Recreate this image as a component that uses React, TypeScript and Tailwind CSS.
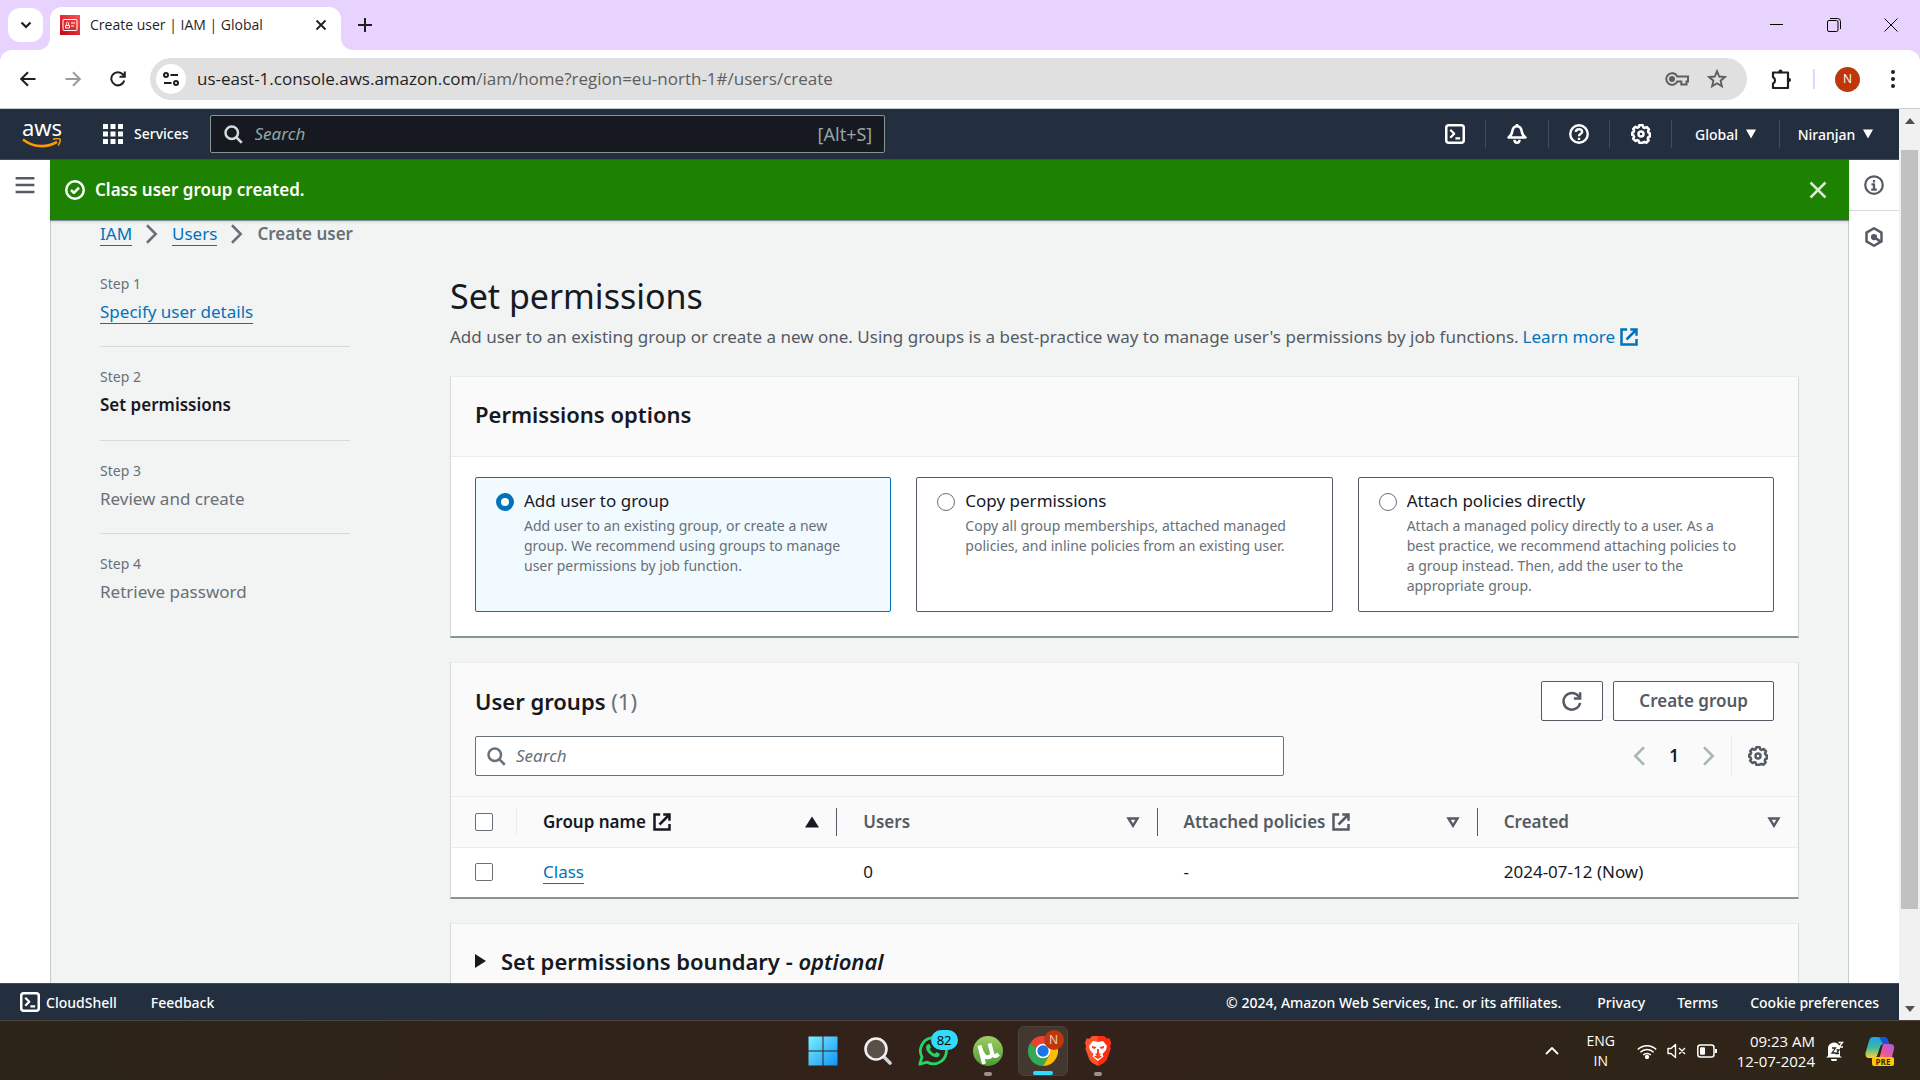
import type { ReactNode } from "react";

/* ---------- Icon helpers ---------- */

type IconProps = { className?: string };

function Glyph({ className = "size-5", children }: { className?: string; children: ReactNode }) {
  return (
    <svg viewBox="0 0 16 16" fill="none" stroke="currentColor" strokeWidth="2" strokeLinejoin="round" className={`shrink-0 ${className}`} aria-hidden="true">
      {children}
    </svg>
  );
}

const SearchIcon = ({ className }: IconProps) => (
  <Glyph className={className}>
    <circle cx="7" cy="7" r="5" />
    <path d="m15 15-4.5-4.5" />
  </Glyph>
);

const ExternalIcon = ({ className }: IconProps) => (
  <Glyph className={className}>
    <path strokeLinejoin="miter" d="M9 2h5v5M6 10l8-8M14 9.500V14H2V2h4.500" />
  </Glyph>
);

const GearIcon = ({ className }: IconProps) => (
  <Glyph className={className}>
    <path d="M6.6 1h2.8l.5 1.7 1.1.5 1.5-.8 1.9 1.9-.8 1.6.4 1 1 .4v2.8l-1.2.5-.4 1 .7 1.5-1.9 1.9-1.4-.7-1.1.5L9.300 15H6.600l-.5-1.600-1.100-.5-1.500.7L1.700 11.700l.8-1.400-.500-1.200L1 8.700V6.900l1.100-.5.4-1.100-.700-1.400 1.800-1.700 1.400.8 1.200-.5z" />
    <circle cx="8" cy="8" r="2" />
  </Glyph>
);

const ShellIcon = ({ className }: IconProps) => (
  <Glyph className={className}>
    <rect x="1" y="1" width="14" height="14" rx="2" strokeWidth="2" />
    <path d="m4.200 4.600 3.200 3.200-3.200 3.200M8.300 11.500h3.800" strokeWidth="1.800" />
  </Glyph>
);

const AngleRight = ({ className }: IconProps) => (
  <Glyph className={className}>
    <path strokeLinejoin="miter" d="m4 1 7 7-7 7" />
  </Glyph>
);

const AngleLeft = ({ className }: IconProps) => (
  <Glyph className={className}>
    <path strokeLinejoin="miter" d="M12 1 5 8l7 7" />
  </Glyph>
);

const CloseIcon = ({ className }: IconProps) => (
  <Glyph className={className}>
    <path d="m2 2 12 12M14 2 2 14" />
  </Glyph>
);

const CaretDown = ({ className }: IconProps) => (
  <svg viewBox="0 0 10 10" className={`shrink-0 ${className}`} aria-hidden="true">
    <path d="M0 0.500h10L5 9.500z" fill="currentColor" />
  </svg>
);

const SortIcon = () => (
  <svg viewBox="0 0 14 12" className="h-3 w-3.5 shrink-0 text-[#545b64]" aria-hidden="true">
    <path d="M2.500 2.500h9L7 9.800z" fill="none" stroke="currentColor" strokeWidth="2.400" />
  </svg>
);

/* ---------- Browser window ---------- */

function TabStrip() {
  return (
    <div className="flex h-[50px] shrink-0 items-end bg-[#e8d3fe] pl-2 text-[#1f1f1f]">
      <button aria-label="Search tabs" className="mb-2 flex h-[34px] w-[35px] items-center justify-center rounded-xl bg-white">
        <svg viewBox="0 0 12 12" className="size-3" fill="none" stroke="currentColor" strokeWidth="2.200">
          <path d="m1.500 3.500 4.500 4.500 4.500-4.500" />
        </svg>
      </button>
      <svg viewBox="0 0 12 12" className="-ml-[5px] size-3 shrink-0" aria-hidden="true">
        <path d="M12 0v12H0A12 12 0 0 0 12 0z" fill="#fff" />
      </svg>
      <div className="flex h-[43px] w-[291px] items-center rounded-t-xl bg-white pr-3.5 pb-[7px] pl-2.5">
        <svg viewBox="0 0 20 20" className="size-5 shrink-0" aria-hidden="true">
          <defs>
            <linearGradient id="iam" x1="0" y1="1" x2="1" y2="0">
              <stop offset="0" stopColor="#bd0816" />
              <stop offset="1" stopColor="#ff5252" />
            </linearGradient>
          </defs>
          <path fill="url(#iam)" d="M0 0h20v20H0z" />
          <rect x="3" y="4.500" width="14" height="11" rx="1" fill="none" stroke="#fff" />
          <path d="M5.500 13v-2.500h4V13zM6.300 10.500V8.700q0-1.300 1.200-1.300t1.200 1.300v1.800M11 8h4M11 11h3" fill="none" stroke="#fff" />
        </svg>
        <span className="ml-2.5 flex-1 whitespace-nowrap text-[14px] leading-5">Create user | IAM | Global</span>
        <button aria-label="Close tab">
          <svg viewBox="0 0 12 12" className="size-3" fill="none" stroke="currentColor" strokeWidth="1.800">
            <path d="m1.500 1.500 9 9M10.500 1.500l-9 9" />
          </svg>
        </button>
      </div>
      <svg viewBox="0 0 12 12" className="size-3 shrink-0" aria-hidden="true">
        <path d="M0 0v12h12A12 12 0 0 1 0 0z" fill="#fff" />
      </svg>
      <button aria-label="New tab" className="mb-[18px] ml-[5px]">
        <svg viewBox="0 0 14 14" className="size-3.5" fill="none" stroke="currentColor" strokeWidth="2">
          <path d="M7 0v14M0 7h14" />
        </svg>
      </button>
      <div className="ml-auto flex h-full items-center text-black">
        <button aria-label="Minimize" className="flex w-[57px] justify-center">
          <svg viewBox="0 0 14 14" className="size-3.5" stroke="currentColor"><path d="M0 6.500h13" /></svg>
        </button>
        <button aria-label="Restore" className="flex w-[57px] justify-center">
          <svg viewBox="0 0 14 14" className="size-3.5" fill="none" stroke="currentColor">
            <rect x=".5" y="2.500" width="10.500" height="11" rx="1.500" />
            <path d="M3 .5h7.500a3 3 0 0 1 3 3V11" />
          </svg>
        </button>
        <button aria-label="Close window" className="flex w-[58px] justify-center">
          <svg viewBox="0 0 14 14" className="size-3.5" stroke="currentColor"><path d="m.5.5 13 13M13.500.5l-13 13" /></svg>
        </button>
      </div>
    </div>
  );
}

function AddressBar() {
  return (
    <div className="shrink-0 bg-[#e8d3fe]">
      <div className="flex h-[59px] items-center rounded-t-xl border-b border-[#c9ccc9] bg-white pr-[25px] text-[#1f1f1f]">
        <div className="flex w-[150px] shrink-0 items-center gap-[29px] pl-5">
          <button aria-label="Back">
            <svg viewBox="0 0 16 16" className="size-4" fill="none" stroke="currentColor" strokeWidth="2"><path d="M15.500 8H1.500M8 1.200 1.200 8 8 14.800" /></svg>
          </button>
          <button aria-label="Forward" className="text-[#9b9b9b]">
            <svg viewBox="0 0 16 16" className="size-4" fill="none" stroke="currentColor" strokeWidth="2"><path d="M.5 8h14M8 1.200 14.800 8 8 14.800" /></svg>
          </button>
          <button aria-label="Reload">
            <svg viewBox="0 0 16 16" className="size-4" fill="none" stroke="currentColor" strokeWidth="2"><path d="M14.300 9.500A6.600 6.600 0 1 1 13 3.500l1.500 1.700M14.800.5v5.300H9.500" /></svg>
          </button>
        </div>
        <div className="flex h-[42px] flex-1 items-center rounded-full bg-[#e0e0e0] pr-5 pl-1.5">
          <button aria-label="View site information" className="flex size-[30px] items-center justify-center rounded-full bg-white">
            <svg viewBox="0 0 16 14" className="h-3.5 w-4" fill="none" stroke="currentColor" strokeWidth="2">
              <circle cx="3" cy="3" r="2" /><path d="M7.500 3H15M1 11h7.500" /><circle cx="13" cy="11" r="2" />
            </svg>
          </button>
          <span className="ml-[11px] flex-1 whitespace-nowrap text-[17px] leading-6 text-[#5e5e5e]">
            <span className="text-[#1f1f1f]">us-east-1.console.aws.amazon.com</span>/iam/home?region=eu-north-1#/users/create
          </span>
          <button aria-label="Passwords" className="text-[#5e5e5e]">
            <svg viewBox="0 0 24 14" className="h-3.5 w-6" fill="none" stroke="currentColor" strokeWidth="2">
              <path d="M12.300 4.500A5.800 5.800 0 1 0 12.300 9.500h4v3h5.200v-3h1.500v-5z" /><circle cx="7" cy="7" r="2" fill="currentColor" />
            </svg>
          </button>
          <button aria-label="Bookmark" className="ml-[18px] text-[#5e5e5e]">
            <svg viewBox="0 0 20 20" className="size-5" fill="none" stroke="currentColor" strokeWidth="1.900">
              <path d="m10 2.200 2.200 5.300 5.700.5-4.300 3.700 1.300 5.600-4.900-3-4.900 3 1.300-5.600L2.100 8l5.700-.5z" />
            </svg>
          </button>
        </div>
        <button aria-label="Extensions" className="ml-[23px]">
          <svg viewBox="0 0 22 22" className="size-[22px]" fill="none" stroke="currentColor" strokeWidth="2.200">
            <path d="M3 4.500h15V20H3v-4.500a3.400 3.400 0 0 0 0-6.200z" strokeLinejoin="round" />
            <circle cx="10.500" cy="3.500" r="2" fill="currentColor" stroke="none" /><circle cx="19" cy="12" r="2" fill="currentColor" stroke="none" />
          </svg>
        </button>
        <span className="ml-[21px] h-5 w-0.5 bg-[#e8d3fe]" />
        <button aria-label="Profile" className="ml-5 flex size-[25px] items-center justify-center rounded-full bg-[#bf360c] text-[12px] text-white">N</button>
        <button aria-label="Menu" className="ml-[31px] flex flex-col gap-[3px]">
          <span className="size-1 rounded-full bg-current" />
          <span className="size-1 rounded-full bg-current" />
          <span className="size-1 rounded-full bg-current" />
        </button>
      </div>
    </div>
  );
}

/* ---------- AWS console ---------- */

const Divider = () => <span className="h-7 w-px shrink-0 bg-[#414d5c]" />;

function ConsoleNav() {
  return (
    <header className="flex h-[51px] shrink-0 items-center border-b border-[#414d5c] bg-[#232f3e] pl-[22px] font-medium text-white">
      <a href="#home" aria-label="AWS home" className="flex w-[40px] flex-col items-center">
        <span className="h-[18px] text-[22px] leading-[14px] font-normal">aws</span>
        <svg viewBox="0 0 40 10" className="h-2.5 w-10" fill="none" stroke="#ff9900" aria-hidden="true">
          <path d="M1 1.500c10 8 23.500 8.700 34 2.300" strokeWidth="2.600" />
          <path d="M31 1.300c3-.7 6.300-.9 7 0s-.300 4.200-1.900 6.200" strokeWidth="1.500" />
        </svg>
      </a>
      <span className="ml-[21px]"><Divider /></span>
      <button className="ml-[20px] flex items-center gap-[11px] text-[14px] leading-5">
        <svg viewBox="0 0 20 20" className="size-5" fill="currentColor" aria-hidden="true">
          <path d="M0 0h5v5H0zM7.500 0h5v5h-5zM15 0h5v5h-5zM0 7.500h5v5H0zM7.500 7.500h5v5h-5zM15 7.500h5v5h-5zM0 15h5v5H0zM7.500 15h5v5h-5zM15 15h5v5h-5z" />
        </svg>
        Services
      </button>
      <label className="ml-[21px] flex h-[38px] w-[36%] items-center rounded-xs border border-[#879596] bg-[#16191f] px-3 font-normal text-[#95a5a6]">
        <SearchIcon className="size-5 text-[#d5dbdb]" />
        <input aria-label="Search services" placeholder="Search" className="ml-3 min-w-0 flex-1 bg-transparent text-[17px] outline-none placeholder:text-[#95a5a6] placeholder:italic" />
        <span className="text-[18px]">[Alt+S]</span>
      </label>
      <div className="ml-auto flex items-center">
        <button aria-label="CloudShell" className="flex w-[60px] justify-center"><ShellIcon /></button>
        <Divider />
        <button aria-label="Notifications" className="flex w-[62px] justify-center">
          <Glyph>
            <path d="M8 1.800c2.400 0 3.400 1.500 3.800 4.200.3 2.300 1.300 3.500 3 4.800H1.200c1.700-1.300 2.700-2.500 3-4.800C4.600 3.300 5.600 1.800 8 1.800zM6 12.500c0 3.200 4 3.200 4 0" strokeWidth="2" /><path d="M8 0v2" />
          </Glyph>
        </button>
        <Divider />
        <button aria-label="Support" className="flex w-[60px] justify-center">
          <Glyph>
            <circle cx="8" cy="8" r="7" strokeWidth="1.900" />
            <path d="M5.500 6.300C5.500 3.500 10.500 3.500 10.500 6.300 10.500 8 8 7.800 8 9.800M8 11v1.700" strokeWidth="1.900" />
          </Glyph>
        </button>
        <Divider />
        <button aria-label="Settings" className="flex w-[61px] justify-center"><GearIcon /></button>
        <Divider />
        <button className="flex w-[107px] items-center justify-center gap-2 text-[14px]">Global <CaretDown className="size-2.5" /></button>
        <Divider />
        <button className="flex w-[119px] items-center justify-center gap-2 pr-2 text-[14px]">Niranjan <CaretDown className="size-2.5" /></button>
      </div>
    </header>
  );
}

const steps = [
  { label: "Specify user details", state: "link" },
  { label: "Set permissions", state: "current" },
  { label: "Review and create", state: "todo" },
  { label: "Retrieve password", state: "todo" },
];

function Steps() {
  return (
    <ol className="w-[250px] shrink-0 text-[#687078]">
      {steps.map((s, i) => (
        <li key={s.label} className="flex h-[93px] flex-col border-b border-[#d5dbdb] pt-[18px] first:h-[75px] first:pt-0 last:border-0 [&:nth-child(2)]:h-[94px]">
          <span className="text-[14px] leading-6">Step {i + 1}</span>
          {s.state === "link" && <a href="#details" className="mt-1 self-start border-b border-[#0073bb] text-[17px] leading-[23px] text-[#0073bb]">{s.label}</a>}
          {s.state === "current" && <span className="mt-1 text-[17px] leading-6 font-semibold text-[#16191f]">{s.label}</span>}
          {s.state === "todo" && <span className="mt-1 text-[17px] leading-6">{s.label}</span>}
        </li>
      ))}
    </ol>
  );
}

const options = [
  { id: "group", title: "Add user to group", text: "Add user to an existing group, or create a new group. We recommend using groups to manage user permissions by job function." },
  { id: "copy", title: "Copy permissions", text: "Copy all group memberships, attached managed policies, and inline policies from an existing user." },
  { id: "attach", title: "Attach policies directly", text: "Attach a managed policy directly to a user. As a best practice, we recommend attaching policies to a group instead. Then, add the user to the appropriate group." },
];

function Panel({ children }: { children: ReactNode }) {
  return (
    <section className="border-x border-t border-b-2 border-x-[#d5dbdb] border-t-[#eaeded] border-b-[#879596] bg-white">{children}</section>
  );
}

function PermissionOptions() {
  return (
    <Panel>
      <h2 className="border-b border-[#eaeded] bg-[#fafafa] px-6 pt-[22px] pb-[27px] text-[22px] leading-[30px] font-semibold">Permissions options</h2>
      <div className="grid grid-cols-3 gap-[25px] px-6 pt-5 pb-6">
        {options.map((o, i) => (
          <label
            key={o.id}
            htmlFor={o.id}
            className="flex rounded-xs border border-[#545b64] bg-white pt-[11px] pr-[30px] pb-[15px] pl-5 has-checked:border-[#0073bb] has-checked:bg-[#f1faff]"
          >
            <input
              id={o.id}
              type="radio"
              name="permission-option"
              defaultChecked={i === 0}
              className="mt-[4px] size-[18px] shrink-0 appearance-none rounded-full border border-[#687078] bg-white checked:border-[5px] checked:border-[#0073bb]"
            />
            <span className="ml-2.5 flex-1">
              <span className="block text-[17px] leading-6">{o.title}</span>
              <span className="mt-[3px] block text-[14px] leading-5 text-[#687078]">{o.text}</span>
            </span>
          </label>
        ))}
      </div>
    </Panel>
  );
}

const checkbox = "block size-[18px] appearance-none rounded-xs border border-[#687078] bg-white";
const columns = [
  { name: "Group name", external: true, sorted: true },
  { name: "Users" },
  { name: "Attached policies", external: true },
  { name: "Created" },
];

function UserGroups() {
  return (
    <Panel>
      <div className="bg-[#fafafa] px-6 pt-[18px] pb-5">
        <div className="flex items-center justify-between">
          <h2 className="text-[22px] leading-[30px] font-semibold">
            User groups <span className="font-normal text-[#687078]">(1)</span>
          </h2>
          <div className="flex gap-2.5 text-[#545b64]">
            <button aria-label="Refresh" className="flex h-10 w-[62px] items-center justify-center rounded-xs border border-[#545b64] bg-white">
              <Glyph>
                <path d="M14.500 9.500A6.700 6.700 0 1 1 13.300 4.200L14.500 6" />
                <path d="M14.500 1v5H9.500" strokeLinejoin="miter" />
              </Glyph>
            </button>
            <button className="h-10 rounded-xs border border-[#545b64] bg-white px-[25px] text-[17px] leading-6 font-semibold">Create group</button>
          </div>
        </div>
        <div className="mt-[15px] flex items-center justify-between">
          <label className="flex h-10 w-[62.300%] items-center rounded-xs border border-[#687078] bg-white px-2.5 text-[#687078]">
            <SearchIcon />
            <input aria-label="Search groups" placeholder="Search" className="ml-2.5 flex-1 bg-transparent text-[17px] outline-none placeholder:text-[#687078] placeholder:italic" />
          </label>
          <div className="flex h-10 items-center">
            <button aria-label="Previous page" className="text-[#aab7b8]"><AngleLeft /></button>
            <button className="w-[50px] text-center text-[17px] font-semibold">1</button>
            <button aria-label="Next page" className="text-[#aab7b8]"><AngleRight /></button>
            <span className="ml-3 h-10 w-px bg-[#eaeded]" />
            <button aria-label="Preferences" className="mr-1.5 ml-4 text-[#545b64]"><GearIcon /></button>
          </div>
        </div>
      </div>
      <table className="w-full table-fixed border-collapse text-left text-[17px] leading-6">
        <thead>
          <tr className="border-y border-[#eaeded] bg-[#fafafa] text-[#545b64]">
            <th className="h-[51px] w-[66px] p-0">
              <div className="flex h-7 items-center border-r border-[#eaeded] pl-6">
                <input type="checkbox" aria-label="Select all groups" className={checkbox} />
              </div>
            </th>
            {columns.map((c) => (
              <th key={c.name} className="group p-0 font-semibold">
                <div className="flex h-7 items-center justify-between border-r border-[#545b64] pr-[17px] pl-[26px] group-last:border-0">
                  <span className={c.sorted ? "flex items-center gap-1.5 text-[#16191f]" : "flex items-center gap-1.5"}>
                    {c.name}
                    {c.external && <ExternalIcon />}
                  </span>
                  {c.sorted ? (
                    <svg viewBox="0 0 14 12" className="h-3 w-3.5 text-[#16191f]" aria-hidden="true"><path d="M7 .5 14 11.500H0z" fill="currentColor" /></svg>
                  ) : (
                    <SortIcon />
                  )}
                </div>
              </th>
            ))}
          </tr>
        </thead>
        <tbody>
          <tr>
            <td className="h-[49px] p-0 pl-6"><input type="checkbox" aria-label="Select Class" className={checkbox} /></td>
            <td className="p-0 pl-[26px]"><a href="#class" className="border-b border-[#0073bb] text-[#0073bb]">Class</a></td>
            <td className="p-0 pl-[26px]">0</td>
            <td className="p-0 pl-[26px]">-</td>
            <td className="p-0 pl-[26px]">2024-07-12 (Now)</td>
          </tr>
        </tbody>
      </table>
    </Panel>
  );
}

function Scrollbar() {
  return (
    <div className="flex w-[21px] shrink-0 flex-col items-center bg-[#f1f1f1]" aria-hidden="true">
      <svg viewBox="0 0 10 6" className="mt-[9px] h-1.5 w-2.5"><path d="M5 0l5 6H0z" fill="#505050" /></svg>
      <div className="mt-[26px] flex w-[17px] flex-1 flex-col">
        <div className="h-[88.700%] bg-[#c1c1c1]" />
      </div>
      <svg viewBox="0 0 10 6" className="mb-2 h-1.5 w-2.5"><path d="M0 0h10L5 6z" fill="#505050" /></svg>
    </div>
  );
}

function ConsoleFooter() {
  return (
    <footer className="flex h-[37px] shrink-0 items-center border-t border-[#414d5c] bg-[#232f3e] pr-5 pl-5 text-[14px] font-medium text-white">
      <button className="flex items-center gap-1.5"><ShellIcon />CloudShell</button>
      <button className="ml-[34px]">Feedback</button>
      <span className="ml-auto">© 2024, Amazon Web Services, Inc. or its affiliates.</span>
      <a href="#privacy" className="ml-9">Privacy</a>
      <a href="#terms" className="ml-8">Terms</a>
      <button className="ml-8">Cookie preferences</button>
    </footer>
  );
}

function Console() {
  return (
    <div className="flex min-w-0 flex-1 flex-col font-['Noto_Sans','Open_Sans',sans-serif] text-[#16191f]">
      <ConsoleNav />
      <div className="flex min-h-0 flex-1">
        <nav className="w-[50px] shrink-0 pt-[15px] pl-[15px] text-[#545b64]">
          <button aria-label="Open navigation">
            <Glyph className="size-5"><path d="M.5 2.500h15M.5 8h15M.5 13.500h15" /></Glyph>
          </button>
        </nav>
        <div className="flex min-w-0 flex-1 flex-col border-x border-[#c4cccc] bg-[#f2f3f3]">
          <div role="status" className="z-10 -mx-px flex h-[61px] shrink-0 items-center border-b border-[#7d8998] bg-[#1d8102] px-[15px] font-semibold text-white shadow-sm">
            <Glyph><circle cx="8" cy="8" r="7" /><path d="m4.800 8 2.300 2.300 4.100-4.100" /></Glyph>
            <span className="ml-2.5 flex-1 text-[17px]">Class user group created.</span>
            <button aria-label="Dismiss" className="mr-1.5 text-[#d9ead5]"><CloseIcon /></button>
          </div>
          <div className="min-h-0 flex-1 overflow-hidden px-[49px]">
            <nav aria-label="Breadcrumb" className="flex items-center pt-[1px] text-[17px] leading-6 text-[#0073bb]">
              <a href="#iam" className="border-b border-[#0073bb] leading-[23px]">IAM</a>
              <AngleRight className="mx-2.5 size-5 text-[#687078]" />
              <a href="#users" className="border-b border-[#0073bb] leading-[23px]">Users</a>
              <AngleRight className="mx-2.5 size-5 text-[#687078]" />
              <span className="font-semibold text-[#687078]">Create user</span>
            </nav>
            <div className="mt-[26px] flex gap-[100px]">
              <Steps />
              <main className="min-w-0 flex-1">
                <h1 className="text-[34px] leading-[48px]">Set permissions</h1>
                <p className="mt-[5px] flex items-center text-[17px] leading-6 text-[#545b64]">
                  Add user to an existing group or create a new one. Using groups is a best-practice way to manage user's permissions by job functions.
                  <a href="#learn" className="ml-1 flex items-center gap-1 text-[#0073bb]">Learn more <ExternalIcon /></a>
                </p>
                <div className="mt-[27px] flex flex-col gap-6">
                  <PermissionOptions />
                  <UserGroups />
                  <Panel>
                    <h2 className="bg-[#fafafa] px-6 pt-[22px] pb-[27px] text-[22px] leading-[30px] font-semibold">
                      <button className="flex items-center gap-[15px]">
                        <svg viewBox="0 0 11 14" className="h-3.5 w-[11px]" aria-hidden="true"><path d="M0 0l11 7-11 7z" fill="currentColor" /></svg>
                        <span>Set permissions boundary - <i>optional</i></span>
                      </button>
                    </h2>
                  </Panel>
                </div>
              </main>
            </div>
          </div>
        </div>
        <aside className="flex w-[50px] shrink-0 flex-col items-center bg-white text-[#545b64]">
          <button aria-label="Info" className="flex h-[51px] w-full items-center justify-center border-b border-[#d5dbdb]">
            <Glyph><circle cx="8" cy="8" r="7" strokeWidth="1.800" /><path d="M8 4v2M6 7.500h2V12M5.800 11.700h4.500" strokeWidth="1.800" /></Glyph>
          </button>
          <button aria-label="Resources" className="flex h-[51px] w-full items-center justify-center">
            <Glyph><path d="m8 1 6 3.500v7L8 15l-6-3.500v-7z" /><circle cx="8" cy="8" r="1.500" fill="currentColor" /><path d="m8 8 5 3.500" /></Glyph>
          </button>
        </aside>
      </div>
      <ConsoleFooter />
    </div>
  );
}

/* ---------- Desktop taskbar ---------- */

function TaskButton({ label, active, running, children }: { label: string; active?: boolean; running?: boolean; children: ReactNode }) {
  return (
    <button
      aria-label={label}
      className={active ? "relative flex size-[50px] items-center justify-center rounded-md border border-[#4c4139] bg-[#43382f]" : "relative flex size-[50px] items-center justify-center"}
    >
      {children}
      {running && <span className={active ? "absolute bottom-0 h-1 w-5 rounded-full bg-[#2fdcfb]" : "absolute bottom-0 h-1 w-2 rounded-full bg-[#9a938d]"} />}
    </button>
  );
}

function Taskbar() {
  return (
    <div className="relative flex h-[60px] shrink-0 items-center justify-center gap-[5px] border-t border-[#4c443c] bg-linear-to-r from-[#2c2419] via-[#33221a] to-[#2e2517] text-white">
      <TaskButton label="Start">
        <svg viewBox="0 0 30 30" className="size-[30px]">
          <defs>
            <linearGradient id="win" x1="0" y1="0" x2="1" y2="1" gradientUnits="objectBoundingBox">
              <stop offset="0" stopColor="#7df0ff" /><stop offset="1" stopColor="#0f93f5" />
            </linearGradient>
          </defs>
          <path fill="url(#win)" d="M.5 .5h14v14H.5zM15.500.5h14v14h-14zM.5 15.500h14v14H.5zM15.500 15.500h14v14h-14z" />
        </svg>
      </TaskButton>
      <TaskButton label="Search">
        <svg viewBox="0 0 28 28" className="size-7" fill="none">
          <path d="m19.500 19.500 6.500 6.500" stroke="#cfd3da" strokeWidth="3.600" strokeLinecap="round" />
          <circle cx="12" cy="12" r="10.500" fill="#5a5049" stroke="#f1f1f4" strokeWidth="2.600" />
        </svg>
      </TaskButton>
      <TaskButton label="WhatsApp, 82 unread">
        <svg viewBox="0 0 30 30" className="size-[30px]" fill="none">
          <path d="M1.800 28.200 4 21A13 13 0 1 1 9.200 26.200z" stroke="#25d366" strokeWidth="2.800" strokeLinejoin="round" />
          <path d="M9.500 8.500c1-1 2-.5 2.300.3l1 2.300c.3.800-1 1.900-1 2.200 1 2.200 2.700 3.600 4.800 4.400.5 0 1.500-1.600 2.100-1.500l2.700 1.300c.8.500.3 1.800-.200 2.400-1.700 2-4.700 1.500-7.700-.4-3-2-5.200-5-5.400-7.500-.1-1.500.5-2.700 1.400-3.500z" fill="#25d366" />
        </svg>
        <span className="absolute top-1 right-0 rounded-full bg-[#2fdcfb] px-1.5 text-[13px] leading-5 text-black">82</span>
      </TaskButton>
      <TaskButton label="uTorrent" running>
        <svg viewBox="0 0 30 30" className="size-[30px]">
          <defs>
            <linearGradient id="ut" x1="0" y1="0" x2="0" y2="1"><stop offset="0" stopColor="#9fce63" /><stop offset="1" stopColor="#4f9c38" /></linearGradient>
          </defs>
          <circle cx="15" cy="15" r="15" fill="url(#ut)" />
          <path d="M6.500 9.500c1.500 5 2.500 10 6.500 11.500M6.500 9.500 11 28M16.500 7.500l3 11M12.500 21c4 1 6.500-1 6.500-4M19.500 18.500c1.500 2.500 4 1.500 6-.5" stroke="#fff" strokeWidth="4" fill="none" />
        </svg>
      </TaskButton>
      <TaskButton label="Chrome" running active>
        <svg viewBox="0 0 30 30" className="size-[30px]">
          <path d="M15 15 2 7.500A15 15 0 0 1 28 7.500H15z" fill="#ea4335" />
          <path d="M15 15 21.500 18.750 15 30A15 15 0 0 1 2 7.500z" fill="#34a853" />
          <path d="M15 7.500h13A15 15 0 0 1 15 30l6.500-11.250z" fill="#fbbc04" />
          <circle cx="15" cy="15" r="7.300" fill="#fff" /><circle cx="15" cy="15" r="5.700" fill="#1a73e8" />
        </svg>
        <span className="absolute top-[3px] right-[3px] flex size-5 items-center justify-center rounded-full bg-[#bf360c] text-[12px] text-[#f3d3c8]">N</span>
      </TaskButton>
      <TaskButton label="Brave" running>
        <svg viewBox="0 0 26 30" className="h-[30px] w-[26px]">
          <path d="M7 0h12l2.500 2.700 3-.2L26 7l-1 3 .5 3-4 11-3 3-5.500 3-5.500-3-3-3-4-11L1 10 0 7l1.500-4.500 3 .2z" fill="#fb542b" />
          <path d="M13 0h6l2.500 2.700 3-.2L26 7l-1 3 .5 3-4 11-3 3-5.500 3z" fill="#ff2a10" />
          <path d="m8 5 5 1 5-1 4 5-1 4-3.500 4 1 2.500L13 25l-5.500-4.500 1-2.500L5 14l-1-4z" fill="#fff" />
          <path d="m7 10 4.500 1L10 13l-3-1zM19 10l-4.500 1 1.500 2 3-1zM12 13h2v4l2 1-3 2-3-2 2-1zM9 20.500l4-2 4 2-4 2.500z" fill="#fb4020" />
        </svg>
      </TaskButton>

      <div className="absolute inset-y-0 right-0 flex items-center pr-[25px]">
        <button aria-label="Hidden icons">
          <svg viewBox="0 0 14 8" className="h-2 w-3.5" fill="none" stroke="currentColor" strokeWidth="1.800"><path d="m1 7 6-6 6 6" /></svg>
        </button>
        <button className="ml-[26px] w-[32px] text-center text-[14px] leading-5">ENG IN</button>
        <button aria-label="Network, sound and battery" className="ml-[20px] flex items-center gap-2.5">
          <svg viewBox="0 0 20 16" className="h-4 w-5" fill="none" stroke="currentColor" strokeWidth="1.500">
            <path d="M.8 6.500a13 13 0 0 1 18.400 0M3.400 9.300a9.300 9.300 0 0 1 13.200 0M6.200 12a5.400 5.400 0 0 1 7.600 0" /><circle cx="10" cy="14" r="1.400" fill="currentColor" />
          </svg>
          <svg viewBox="0 0 20 16" className="h-4 w-5" fill="none" stroke="currentColor" strokeWidth="1.400">
            <path d="M1 5.500h3L8.500 1.500v13L4 10.500H1zM12 5l6 6M18 5l-6 6" strokeLinejoin="round" />
          </svg>
          <svg viewBox="0 0 20 14" className="h-3.5 w-5" fill="none" stroke="currentColor" strokeWidth="1.500">
            <rect x=".8" y="1" width="16.200" height="12" rx="2.500" /><rect x="3" y="3.200" width="5" height="7.600" rx="1" fill="currentColor" stroke="none" /><path d="M19 5v4" strokeWidth="2" />
          </svg>
        </button>
        <button className="ml-5 whitespace-nowrap text-right text-[15px] leading-5">09:23 AM<br />12-07-2024</button>
        <button aria-label="Notifications" className="ml-[11px]">
          <svg viewBox="0 0 18 20" className="h-5 w-[18px]">
            <path d="M2 15V8a6 6 0 0 1 12-1v8l2 1.500H0zM5 18h6a3 2.500 0 0 1-6 0z" fill="#fff" />
            <path d="M6 7h3.500L6 12h4M10.500 9H13l-2.500 3.500H13" fill="none" stroke="#2e2517" strokeWidth="1.300" />
            <path d="M12.500 1.500h4L13 6h4" fill="none" stroke="#fff" strokeWidth="1.400" />
          </svg>
        </button>
        <button aria-label="Copilot preview" className="ml-[21px]">
          <svg viewBox="0 0 30 30" className="size-[30px]">
            <defs>
              <linearGradient id="cpa" x1="0" y1="0" x2="0" y2="1"><stop offset="0" stopColor="#1ea0f0" /><stop offset=".5" stopColor="#3fb8a0" /><stop offset="1" stopColor="#ffd02f" /></linearGradient>
              <linearGradient id="cpb" x1="1" y1="0" x2="0" y2="1"><stop offset="0" stopColor="#a25df0" /><stop offset=".6" stopColor="#f0588f" /><stop offset="1" stopColor="#ff9a50" /></linearGradient>
            </defs>
            <path d="M8 1h11q3 0 4 4l1 3h-5q-3 0-4 3l-3 9q-1 2-4 2H4q-4 0-3.500-5L4 5q1-4 4-4z" fill="url(#cpa)" />
            <path d="M14 1h5q3 0 4 4l1 3h-6z" fill="#1c54d8" />
            <path d="M19 8h6q5 0 4 5l-2 8q-1 3-4 3H12q2-1 3-4l2.500-10q.5-2 1.500-2z" fill="url(#cpb)" />
            <rect x="7" y="21" width="22" height="9" rx="2" fill="#ffc800" />
            <text x="18" y="28.500" textAnchor="middle" fontSize="8" fontWeight="700" fill="#3a2a00">PRE</text>
          </svg>
        </button>
      </div>
    </div>
  );
}

export default function App() {
  return (
    <div className="flex h-screen flex-col overflow-hidden bg-white font-['Open_Sans','Noto_Sans',sans-serif]">
      <TabStrip />
      <AddressBar />
      <div className="flex min-h-0 flex-1">
        <Console />
        <Scrollbar />
      </div>
      <Taskbar />
    </div>
  );
}
